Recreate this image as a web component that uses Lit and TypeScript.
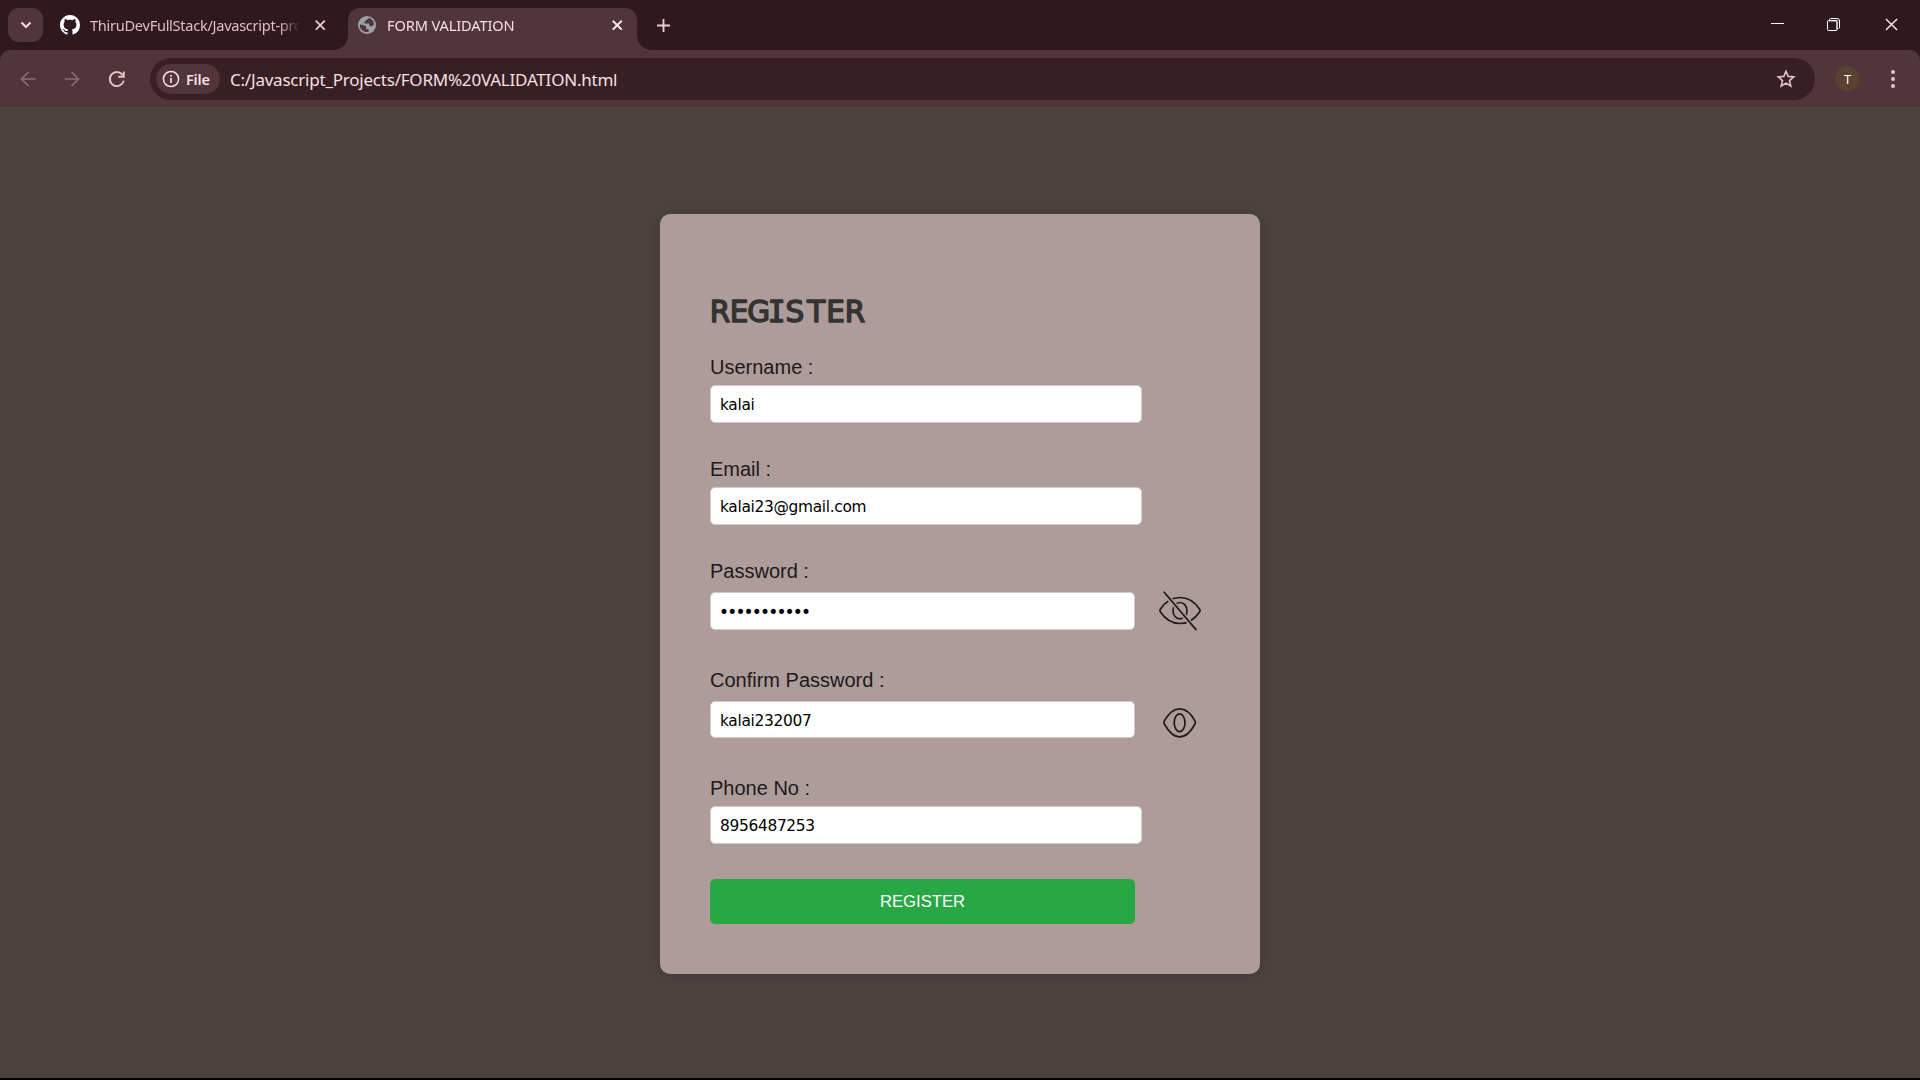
import { LitElement, html, css, svg } from "lit";
import { customElement } from "lit/decorators.js";

const chevron = html`<svg width="12" height="8" viewBox="0 0 12 8"><path d="M1.5 1.5 6 6 10.5 1.5" fill="none" stroke="#f3dfe1" stroke-width="2"/></svg>`;
const github = html`<svg class="gh" width="20" height="20" viewBox="0 0 16 16"><path fill="#fff" d="M8 0C3.58 0 0 3.58 0 8c0 3.54 2.29 6.53 5.47 7.59.4.07.55-.17.55-.38 0-.19-.01-.82-.01-1.49-2.01.37-2.53-.49-2.69-.94-.09-.23-.48-.94-.82-1.13-.28-.15-.68-.52-.01-.53.63-.01 1.08.58 1.23.82.72 1.21 1.87.87 2.33.66.07-.52.28-.87.51-1.07-1.78-.2-3.64-.89-3.64-3.95 0-.87.31-1.59.82-2.15-.08-.2-.36-1.02.08-2.12 0 0 .67-.21 2.2.82.64-.18 1.32-.27 2-.27s1.36.09 2 .27c1.53-1.04 2.2-.82 2.2-.82.44 1.1.16 1.92.08 2.12.51.56.82 1.27.82 2.15 0 3.07-1.87 3.75-3.65 3.95.29.25.54.73.54 1.48 0 1.07-.01 1.93-.01 2.2 0 .21.15.46.55.38A8.01 8.01 0 0 0 16 8c0-4.42-3.58-8-8-8Z"/></svg>`;
const globe = html`<svg width="18" height="18" viewBox="0 0 18 18"><circle cx="9" cy="9" r="9" fill="#9aa0a6"/><path fill="#50353a" d="M10.6 2.1c-.4 1-1.200 1.500-2.300 1.600-.2 1.100-.8 1.700-1.900 1.800v1.900h3.800c1 0 1.300.7 1.300 1.600v1.300h1.400c.9 0 1.700-.2 2.200-1.100l.9-.8a7 7 0 0 0-5.400-6.300ZM1.900 8.300 6.100 9.400c1.700.3 2.100 1 2.100 2.300v1.500h1.700c.7 0 .8.500.8 1.100v1.500A7 7 0 0 1 1.900 8.300Z"/></svg>`;
const cross = (color: string, size: number, w: number) => html`<svg width=${size} height=${size} viewBox="0 0 10 10"><path d="M.7.7 9.300 9.300M9.300.7.7 9.300" fill="none" stroke=${color} stroke-width=${w}/></svg>`;
const plus = html`<svg width="13" height="13" viewBox="0 0 13 13"><path d="M6.500 0V13M0 6.500H13" stroke="#f0cdd1" stroke-width="1.800"/></svg>`;
const arrow = (d: string) => html`<svg width="16" height="16" viewBox="0 0 16 16"><path d=${d} fill="none" stroke="#8b6d72" stroke-width="1.700"/></svg>`;
const reload = html`<svg width="18" height="18" viewBox="0 0 18 18"><path d="M14.700 5.200A7 7 0 1 0 15.700 10.600M15.800 1.600V6.800H10.300" fill="none" stroke="#efc0c6" stroke-width="1.900"/></svg>`;
const info = html`<svg width="18" height="18" viewBox="0 0 18 18"><circle cx="9" cy="9" r="7.600" fill="none" stroke="#f5dfe1" stroke-width="1.500"/><path d="M9 8V13M9 5V6.700" stroke="#f5dfe1" stroke-width="1.700"/></svg>`;
const star = html`<svg width="20" height="20" viewBox="0 0 20 20"><path d="M10 2.300 12.200 7.400 17.800 7.900 13.500 11.600 14.800 17 10 14.100 5.200 17 6.500 11.600 2.200 7.900 7.800 7.400Z" fill="none" stroke="#dec3c6" stroke-width="1.600"/></svg>`;
const dots = html`<svg width="6" height="20" viewBox="0 0 6 20">${[3, 10, 17].map((y) => svg`<circle cx="3" cy=${y} r="2" fill="#f0bfc6"/>`)}</svg>`;
const minimize = html`<svg width="13" height="13" viewBox="0 0 13 13"><path d="M0 5.500H13" stroke="#fff"/></svg>`;
const restore = html`<svg width="13" height="13" viewBox="0 0 13 13"><path d="M2.500 2V1.500Q2.500.5 3.500.5H10Q12.500.5 12.500 3V9.500Q12.500 10.500 11.500 10.500" fill="none" stroke="#fff"/><path d="M1.500 3H10V11.500" fill="none" stroke="#a08c90" stroke-width="1.600"/><rect x=".5" y="2.500" width="9.500" height="10" rx="1" fill="none" stroke="#fff"/></svg>`;
const eyeOff = html`<svg class="eye" width="44" height="44" viewBox="0 0 44 44"><g fill="none" stroke="#1d1a1a" stroke-width="1.700" stroke-linecap="round"><path d="M2.300 20.300C7.500 12.500 14 8.500 22 8.500S36.500 12.500 41.700 20.300Q42.500 21.500 41.700 22.700C36.500 30.500 30 34.500 22 34.500S7.500 30.500 2.300 22.700Q1.500 21.500 2.300 20.300Z"/><ellipse cx="22" cy="21.700" rx="7" ry="8.200"/><path d="M9 7 35.500 38" stroke="#ae9c9b" stroke-width="4.600" stroke-linecap="butt"/><path d="M6.200 3.200 38 40.600"/></g></svg>`;
const eye = html`<svg class="eye" width="44" height="44" viewBox="0 1 44 44"><g fill="none" stroke="#1d1a1a" stroke-width="1.700"><path d="M6.300 23.800C10.500 16.500 15.500 11.800 21.700 11.800S33 16.500 37 23.800Q37.700 25.400 37 27C33 34.500 28 39.900 21.700 39.900S10.500 34.500 6.300 27Q5.600 25.400 6.300 23.800Z"/><ellipse cx="21.600" cy="25.700" rx="5.400" ry="8.900"/></g></svg>`;

@customElement("browser-chrome")
class BrowserChrome extends LitElement {
  static styles = css`
    :host { display: block; font-family: "Noto Sans", "Open Sans", sans-serif; color: #f5e0e2; }
    * { box-sizing: border-box; }
    svg { display: block; flex: none; }
    .strip { display: flex; height: 50px; background: #2f191f; padding-left: 8px; }
    .search { width: 35px; height: 34px; margin-top: 8px; border-radius: 11px; background: #50353a; display: grid; place-items: center; }
    .tab { display: flex; align-items: center; height: 42px; margin-top: 8px; padding-bottom: 8px; font-size: 14.6px; }
    .idle { width: 305px; padding-left: 17px; color: #e3bdc2; }
    .name { width: 210px; margin-left: 10px; white-space: nowrap; line-height: 24px; letter-spacing: -0.29px; -webkit-mask-image: linear-gradient(90deg, #000 90%, transparent 100%); mask-image: linear-gradient(90deg, #000 90%, transparent 100%); }
    .idle .shut { margin-left: 15px; }
    .active { position: relative; width: 289px; padding-left: 10px; background: #50353a; border-radius: 12px 12px 0 0; }
    .active .name { width: 219px; margin-left: 11px; letter-spacing: -0.12px; }
    .active .shut { margin-left: 6px; }
    .active::before, .active::after { content: ""; position: absolute; bottom: 0; width: 14px; height: 14px; }
    .active::before { left: -14px; background: radial-gradient(circle at 0 0, transparent 13.5px, #50353a 14px); }
    .active::after { right: -14px; background: radial-gradient(circle at 100% 0, transparent 13.5px, #50353a 14px); }
    .plus { padding: 18.5px 0 0 19.5px; }
    .window { display: flex; gap: 43px; margin-left: auto; padding: 18px 22px 0 0; }
    .window svg:nth-child(2) { margin-right: 2px; }
    .back { background: #2f191f; }
    .bar { display: flex; align-items: center; height: 57px; background: #50353a; border-radius: 10px 10px 0 0; padding-left: 20px; }
    .nav { display: flex; align-items: center; gap: 28.2px; width: 130px; }
    .address { display: flex; align-items: center; width: 1665px; height: 42px; border-radius: 21px; background: #371f24; padding: 0 19.5px 0 6px; }
    .chip { display: flex; align-items: center; width: 64px; height: 30px; border-radius: 15px; background: #50353a; padding-left: 6px; gap: 6px; font-size: 14.5px; font-weight: 600; letter-spacing: -0.2px; }
    .url { flex: 1; margin-left: 10px; padding-top: 1px; font-size: 17px; letter-spacing: -0.22px; white-space: nowrap; }
    .avatar { display: grid; place-items: center; width: 25px; height: 25px; margin: 0 29.5px 0 20px; border-radius: 50%; background: #5b4034; color: #fff; font: 13px "Open Sans", sans-serif; }
    .edge { height: 2px; background: #54413f; }
  `;
  render() {
    return html`
      <div class="strip">
        <div class="search">${chevron}</div>
        <div class="tab idle">${github}<span class="name">ThiruDevFullStack/Javascript-pro</span><span class="shut">${cross("#f0cdd1", 10.5, 1.7)}</span></div>
        <div class="tab active">${globe}<span class="name">FORM VALIDATION</span><span class="shut">${cross("#fbe9ea", 10.5, 1.8)}</span></div>
        <div class="plus">${plus}</div>
        <div class="window">${minimize}${restore}${cross("#f6eeee", 13, 1.1)}</div>
      </div>
      <div class="back"><div class="bar">
        <div class="nav">${arrow("M8.500 1 1.500 8 8.500 15M1.500 8H15.500")}${arrow("M7.500 1 14.500 8 7.500 15M14.500 8H.5")}${reload}</div>
        <div class="address"><div class="chip">${info}<span>File</span></div><span class="url">C:/Javascript_Projects/FORM%20VALIDATION.html</span>${star}</div>
        <div class="avatar">T</div>
        ${dots}
      </div></div>
      <div class="edge"></div>`;
  }
}

@customElement("register-form")
class RegisterForm extends LitElement {
  static styles = css`
    :host { display: block; }
    * { box-sizing: border-box; }
    .card { width: 600px; height: 760px; padding: 77px 50px 50px; border-radius: 10px; background: #ae9c9b; box-shadow: 0 0 12px rgba(0, 0, 0, 0.1); font-family: "Liberation Sans", Arial, sans-serif; }
    .title { display: block; height: 40px; margin: 0 0 24px; }
    .title svg { display: block; overflow: visible; }
    .title text { font: 400 29.5px "DejaVu Sans", sans-serif; fill: #333; stroke: #333; stroke-width: 1.5px; stroke-linejoin: round; text-anchor: middle; }
    .slab { font-family: "DejaVu Sans Mono", monospace; }
    .field { margin-bottom: 34.5px; }
    .label { display: block; height: 24px; margin-bottom: 6px; font-size: 20px; line-height: 24px; color: #1c1a1a; }
    .row { display: flex; align-items: center; gap: 22px; }
    .secret { height: 44px; }
    .input { display: block; width: 432px; height: 37.5px; padding: 3px 9px 0; border: 1px solid #ccc; border-radius: 5px; background: #fff; color: #000; outline: none; font: 15.4px "DejaVu Sans", sans-serif; letter-spacing: -0.31px; }
    .secret .input { width: 425px; }
    .input[type="password"] { padding: 2px 8px 0; font-size: 17px; letter-spacing: -1.83px; }
    .eye { display: block; flex: none; margin-left: 0.5px; }
    .submit { display: block; width: 425px; height: 45px; margin-top: 35.5px; border: 0; border-radius: 5px; background: #28a745; color: #fff; font: 16.67px "Liberation Sans", Arial, sans-serif; }
    .last { margin-bottom: 0; }
  `;
  render() {
    const fields = [
      { label: "Username :", value: "kalai" },
      { label: "Email :", value: "kalai23@gmail.com" },
      { label: "Password :", value: "kalai232007", type: "password", icon: eyeOff },
      { label: "Confirm Password :", value: "kalai232007", icon: eye },
      { label: "Phone No :", value: "8956487253", last: true },
    ];
    return html`<div class="card">
      <h1 class="title"><svg width="160" height="40"><text x="9.900 29 48.700 66.700 84.800 106.300 125.500 144.900" y="31">REG<tspan class="slab">I</tspan>STER</text></svg></h1>
      ${fields.map((f) => html`<div class="field ${f.last ? "last" : ""}">
        <label class="label">${f.label}</label>
        <div class="row ${f.icon ? "secret" : ""}"><input class="input" type=${f.type ?? "text"} spellcheck="false" .value=${f.value}>${f.icon ?? ""}</div>
      </div>`)}
      <button class="submit">REGISTER</button>
    </div>`;
  }
}

@customElement("app-root")
class AppRoot extends LitElement {
  static styles = css`
    :host { display: block; }
    .screen { display: flex; flex-direction: column; width: 1920px; height: 1080px; box-sizing: border-box; overflow: hidden; background: #4b413f; border-bottom: 2px solid #000; }
    .page { display: flex; justify-content: center; padding-top: 105px; }
  `;
  render() {
    return html`<div class="screen"><browser-chrome></browser-chrome><main class="page"><register-form></register-form></main></div>`;
  }
}
